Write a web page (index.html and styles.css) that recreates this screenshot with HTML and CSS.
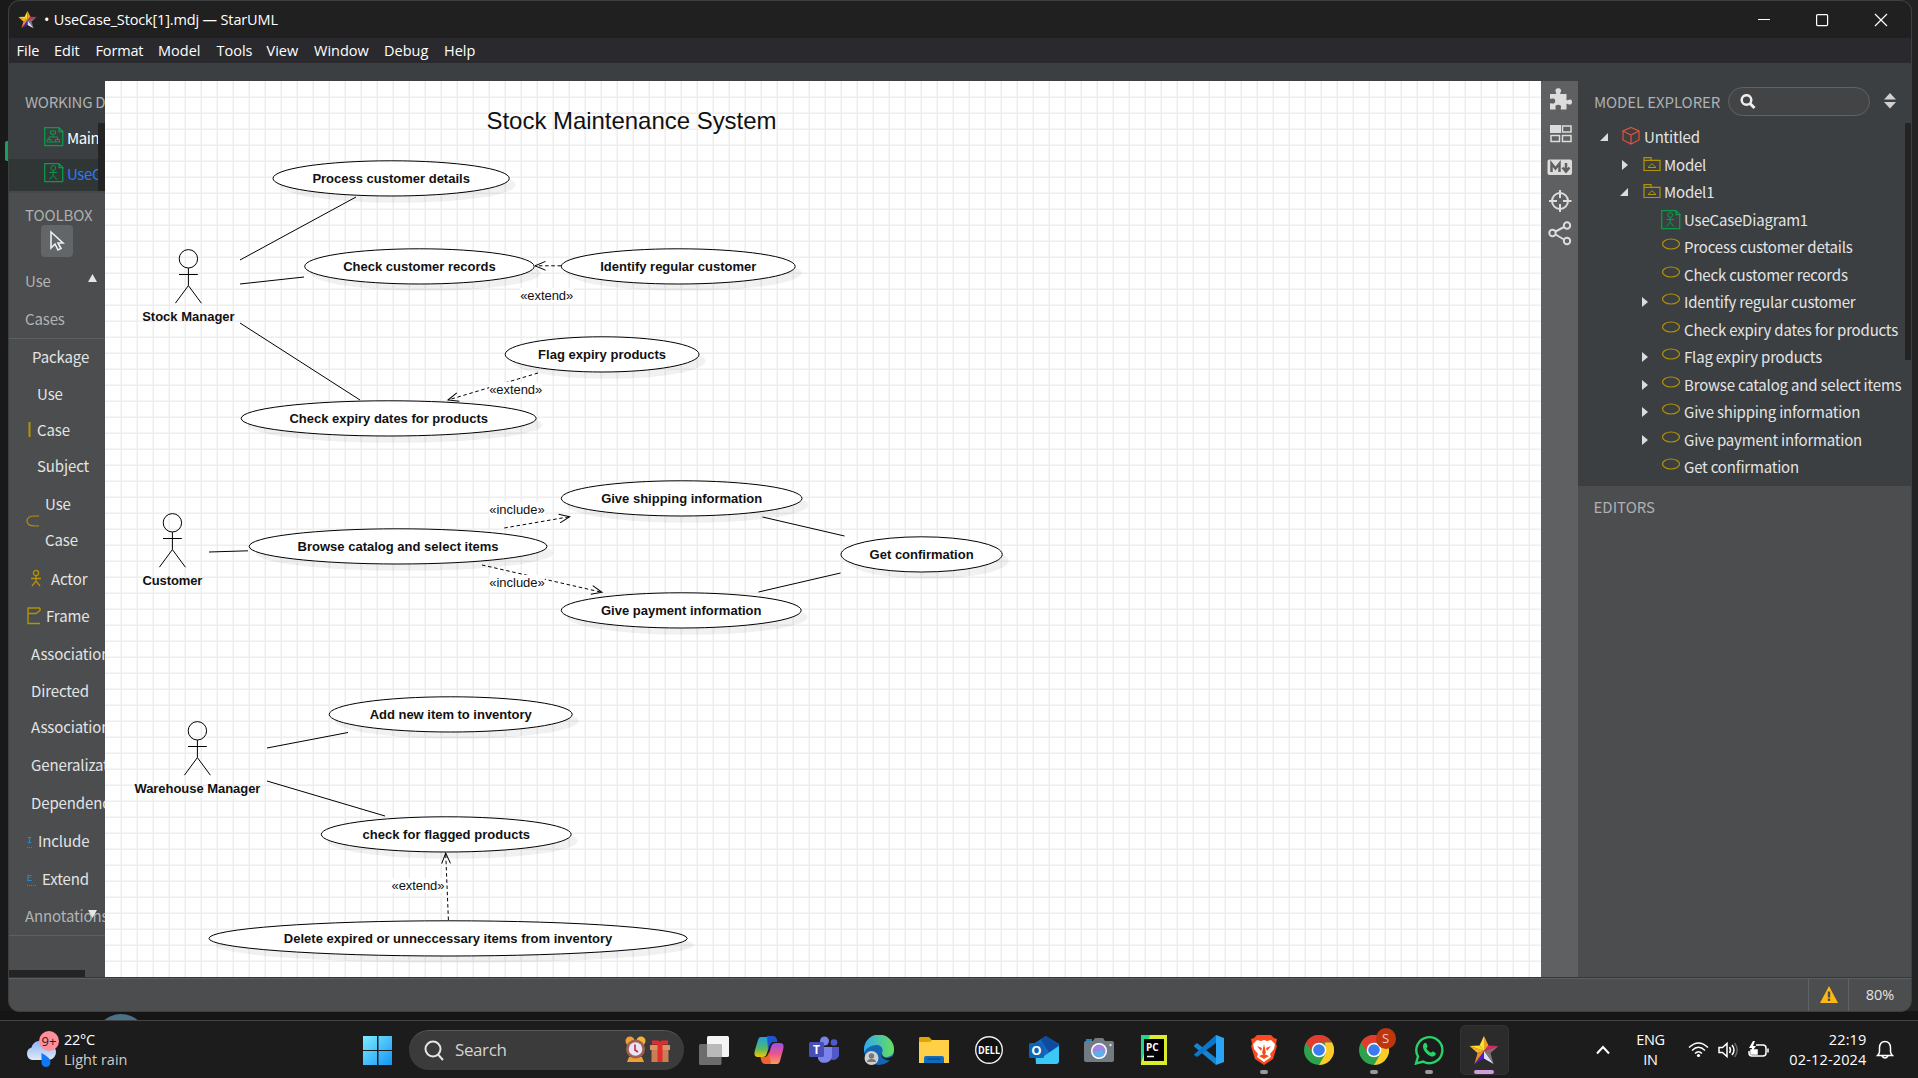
FILE: index.html
```html
<!DOCTYPE html>
<html lang="en">
<head>
<meta charset="utf-8">
<title>UseCase_Stock[1].mdj — StarUML</title>
<link rel="stylesheet" href="styles.css">
</head>
<body>
<svg width="0" height="0" class="defs">
  <defs>
    <symbol id="star" viewBox="0 0 30 30">
      <path d="M15 1 15 16 10.500 10.500Z" fill="#ffe12b"/><path d="M15 1 19.500 10.500 15 16Z" fill="#e9a02b"/>
      <path d="M19.500 10.500 29.500 11 15 16Z" fill="#e0245e"/><path d="M29.500 11 21.500 18 15 16Z" fill="#7d1238"/>
      <path d="M21.500 18 24.500 29 15 16Z" fill="#777"/><path d="M21.500 18 15 16 29.500 11Z" fill="#aaa" opacity=".55"/>
      <path d="M24.500 29 15 23.500 15 16Z" fill="#e3dcff"/><path d="M15 23.500 5.500 29 15 16Z" fill="#4b1fc0"/>
      <path d="M5.500 29 8.500 18 15 16Z" fill="#f08a24"/><path d="M8.500 18 .5 11 15 16Z" fill="#f7b32b"/>
      <path d="M.5 11 10.500 10.500 15 16Z" fill="#ffd92b"/>
    </symbol>
    <symbol id="usecase-doc" viewBox="0 0 20 20">
      <path d="M14.500.7H.7v18h18V5M15 .7v4h4zM15 .7l4 4" fill="none" stroke="#0a9a48" stroke-width="1.300"/>
      <circle cx="9.200" cy="5" r="2.400" fill="none" stroke="#0a9a48"/><path d="M9.200 7.400v5M5.500 9.500h7.400M5.500 16.500l3.700-4.200 3.700 4.200" fill="none" stroke="#0a9a48"/>
    </symbol>
    <symbol id="package" viewBox="0 0 18 16">
      <path d="M1 14.500V1.700h7v2.600h9v10.200zM1 4.300h7" fill="none" stroke="#b39305" stroke-width="1.200"/><path d="M5 11.500h8L9 7.700z" fill="none" stroke="#b39305"/>
    </symbol>
    <symbol id="oval" viewBox="0 0 20 14"><ellipse cx="10" cy="7" rx="8.500" ry="5" fill="none" stroke="#b39305" stroke-width="1.200"/></symbol>
    <symbol id="open" viewBox="0 0 8 8"><path d="M8 0v8H0z" fill="#dcdcdc"/></symbol>
    <symbol id="closed" viewBox="0 0 6 10"><path d="M0 0 6 5 0 10z" fill="#dcdcdc"/></symbol>
    <symbol id="chrome" viewBox="0 0 30 30">
      <circle cx="15" cy="15" r="15" fill="#2ca24c"/><path d="M15 0a15 15 0 0 1 13 7.500H15L9 18 2 7.500A15 15 0 0 1 15 0z" fill="#e33b2e"/>
      <path d="M28 7.500A15 15 0 0 1 15 30l6.500-11.300L21 7.500z" fill="#fccb26"/><circle cx="15" cy="15" r="7.300" fill="#fff"/><circle cx="15" cy="15" r="5.800" fill="#3a7bee"/>
    </symbol>
  </defs>
</svg>

<div class="desktop">
  <i class="peek peek-tab"></i><i class="peek peek-arc"></i>
  <div class="window">
    <header class="titlebar">
      <svg class="app-star"><use href="#star"/></svg>
      <span class="title"><b>•</b>UseCase_Stock[1].mdj — StarUML</span>
      <svg class="caption" width="150" height="36" fill="none" stroke="#fff" stroke-width="1.200"><path d="M10 17.500h12M127 12l12 12M139 12l-12 12"/><rect x="68.600" y="12.600" width="11" height="11" rx="1"/></svg>
    </header>
    <nav class="menubar"><span class="m1">File</span><span class="m2">Edit</span><span class="m3">Format</span><span class="m4">Model</span><span class="m5">Tools</span><span class="m6">View</span><span class="m7">Window</span><span class="m8">Debug</span><span class="m9">Help</span></nav>
    <div class="strip"></div>
    <main class="main">
      <aside class="left">
        <section class="working">
          <h2>WORKING D</h2>
          <div class="working-list">
            <div class="docs">
              <div class="doc"><svg width="20" height="20" viewBox="0 0 20 20" fill="none" stroke="#0a9a48"><path d="M14.500.7H.7v18h18V5M15 .7v4h4zM15 .7l4 4" stroke-width="1.300"/><path d="M6.500 4h5v3h-5zM9 7v3M5 12.500V10h8.500v2.500M3 12.500h4v2.500H3zM11.500 12.500h4v2.500h-4zM7 15h4.500"/></svg><span>Main</span></div>
              <div class="doc active"><svg width="20" height="20"><use href="#usecase-doc"/></svg><span>UseC</span></div>
            </div>
            <i class="thumb"></i>
          </div>
        </section>
        <section class="toolbox">
          <h2>TOOLBOX</h2>
          <div class="pointer"><svg width="16" height="22" viewBox="0 0 16 22"><path d="M2 2v16l4-4 3 6 3-1.500-3-5.500h5z" fill="none" stroke="#eee" stroke-width="1.600"/></svg></div>
          <div class="group">Use<br>Cases<svg class="up" width="9" height="8"><path d="M0 8 4.500 0 9 8z" fill="#e6e6e6"/></svg></div>
          <div class="tool h37 i24">Package</div>
          <div class="tool multi i29">Use<br>Case<br>Subject<svg class="bar" width="3" height="15"><path d="M1.500 0v15" stroke="#b39305" stroke-width="2"/></svg></div>
          <div class="tool multi i37">Use<br>Case<svg class="half" width="13" height="12" fill="none" stroke="#b39305" stroke-width="1.200"><path d="M13 1H9C3 1 1 3 1 6s2 5 8 5h4"/></svg></div>
          <div class="tool"><svg class="ic-actor" width="12" height="18" fill="none" stroke="#b39305" stroke-width="1.300"><circle cx="6" cy="4" r="2.600"/><path d="M6 7v5M1 9.500h10M2 17l4-5 4 5"/></svg>Actor</div>
          <div class="tool h37"><svg class="ic-frame" width="14" height="18" fill="none" stroke="#b39305" stroke-width="1.400"><path d="M13 1H1v15.500h12M1 6.500h8l4-3V1"/></svg>Frame</div>
          <div class="tool i22">Association</div>
          <div class="tool multi i23 directed">Directed<br>Association</div>
          <div class="tool i23">Generalization</div>
          <div class="tool i23">Dependency</div>
          <div class="tool"><span class="mark">I</span>Include</div>
          <div class="tool"><span class="mark wide">E</span>Extend</div>
          <div class="group last">Annotations<svg class="down" width="9" height="8"><path d="M0 0h9L4.500 8z" fill="#e6e6e6"/></svg></div>
          <i class="hthumb"></i>
        </section>
      </aside>

      <div class="canvas">
        <svg id="diagram" width="1436" height="896" viewBox="105 81 1436 896"></svg>
      </div>

      <div class="rail">
        <svg width="37" height="170" viewBox="0 0 37 170">
          <g fill="#dcdcdc"><path d="M9 13h6c1-1-1-2-.5-4 .5-2.500 5-2.500 5.500 0 .5 2-1.500 3-.5 4h6v6c1 1 2-1 4-.5 2 .5 2 4.500 0 5-2 .5-3-1.500-4-.5v5.500h-5.500c-1-1 1-2.500-.5-4-1-1-3.500-1-4.500 0-1.500 1.500.5 3-.5 4H9v-6c1-1 3 1 4.500-.5 1-1 1-3 0-4-1.500-1.500-3.500.5-4.500-.5z"/>
          <path d="M9 44h11v8H9z"/><rect x="6.500" y="78.500" width="24.500" height="15.500" rx="2"/></g>
          <g fill="none" stroke="#dcdcdc" stroke-width="1.500"><path d="M21.500 45h8.500v6h-8.500zM10 54.500h8.500v6H10zM21.500 54.500h8.500v6h-8.500z"/></g>
          <g fill="none" stroke="#5f6062" stroke-width="2.500"><path d="M10.500 91v-8.500l4 5 4-5V91"/><path d="M25 82v8M21.500 86.500l3.500 4 3.500-4"/></g>
          <g fill="none" stroke="#dcdcdc" stroke-width="2"><circle cx="19" cy="120" r="8"/><path d="M19 109v8M19 123v8M8 120h8M22 120h8.500"/><circle cx="11.500" cy="152" r="3.200"/><circle cx="26" cy="144.500" r="3.200"/><circle cx="26" cy="160" r="3.200"/><path d="m14.500 150.500 8.500-4.500M14.500 153.500l8.500 5"/></g>
        </svg>
      </div>

      <aside class="right">
        <section class="explorer">
          <div class="explorer-head">
            <h2>MODEL EXPLORER</h2>
            <div class="search"><svg width="16" height="16" fill="none" stroke="#eee"><circle cx="6.500" cy="6" r="4.800" stroke-width="2.500"/><path d="m10 9.500 4.500 4.500" stroke-width="3"/></svg></div>
            <svg class="sort" width="12" height="16" fill="#d0d0d0"><path d="M0 6.500 6 0l6 6.500zM0 9h12l-6 6.500z"/></svg>
          </div>
          <div class="tree-wrap">
            <div class="tree">
              <div class="node l1"><svg class="tw"><use href="#open"/></svg><svg class="ic" width="18" height="19" viewBox="0 0 18 19" fill="none" stroke="#e0533c" stroke-width="1.200"><path d="M9 1.500 17 5v9l-8 4-8-4V5zM1 5l8 4 8-4M9 9v9"/></svg>Untitled</div>
              <div class="node l2"><svg class="tw c"><use href="#closed"/></svg><svg class="ic" width="18" height="16"><use href="#package"/></svg>Model</div>
              <div class="node l2"><svg class="tw"><use href="#open"/></svg><svg class="ic" width="18" height="16"><use href="#package"/></svg>Model1</div>
              <div class="node l3"><svg class="ic" width="20" height="20"><use href="#usecase-doc"/></svg>UseCaseDiagram1</div>
              <div class="node l3"><svg class="ic" width="20" height="14"><use href="#oval"/></svg>Process customer details</div>
              <div class="node l3"><svg class="ic" width="20" height="14"><use href="#oval"/></svg>Check customer records</div>
              <div class="node l3"><svg class="tw c"><use href="#closed"/></svg><svg class="ic" width="20" height="14"><use href="#oval"/></svg>Identify regular customer</div>
              <div class="node l3"><svg class="ic" width="20" height="14"><use href="#oval"/></svg>Check expiry dates for products</div>
              <div class="node l3"><svg class="tw c"><use href="#closed"/></svg><svg class="ic" width="20" height="14"><use href="#oval"/></svg>Flag expiry products</div>
              <div class="node l3"><svg class="tw c"><use href="#closed"/></svg><svg class="ic" width="20" height="14"><use href="#oval"/></svg>Browse catalog and select items</div>
              <div class="node l3"><svg class="tw c"><use href="#closed"/></svg><svg class="ic" width="20" height="14"><use href="#oval"/></svg>Give shipping information</div>
              <div class="node l3"><svg class="tw c"><use href="#closed"/></svg><svg class="ic" width="20" height="14"><use href="#oval"/></svg>Give payment information</div>
              <div class="node l3"><svg class="ic" width="20" height="14"><use href="#oval"/></svg>Get confirmation</div>
            </div>
            <i class="tree-thumb"></i>
          </div>
        </section>
        <section class="editors"><h2>EDITORS</h2></section>
      </aside>
    </main>
    <footer class="status">
      <span class="warn"><svg width="18" height="17"><path d="M9 0 18 17H0z" fill="#fdb813"/><path d="M9 5.500v6M9 12.500v2.500" stroke="#4b4d4f" stroke-width="2.400"/></svg></span>
      <span class="zoom">80%</span>
    </footer>
  </div>
</div>

<div class="taskbar">
  <div class="weather">
    <svg width="36" height="38" viewBox="0 0 36 38"><defs><linearGradient id="cl" x2="0" y2="1"><stop stop-color="#8db7f5"/><stop offset="1" stop-color="#dfe8f8"/></linearGradient></defs>
      <path d="M7 29a6.500 6.500 0 0 1-.5-12.500A9 9 0 0 1 22 13a7 7 0 0 1 2 16z" fill="url(#cl)"/><path d="M16.500 22c5 3 9 5 9 9.500a4.500 4.500 0 0 1-9 0z" fill="#0f78f2"/><circle cx="24" cy="10" r="10" fill="#ff8f9b"/><text x="24" y="15" text-anchor="middle" class="badge-text">9+</text></svg>
    <div class="two">22°C<br><em>Light rain</em></div>
  </div>
  <div class="start"><svg width="30" height="30"><defs><linearGradient id="win" x2="1" y2="1"><stop stop-color="#7cecff"/><stop offset="1" stop-color="#1495f5"/></linearGradient></defs><path d="M0 1h14v14H0zM15.500 1H29v14H15.500zM0 16h14v14H0zM15.500 16H29v14H15.500z" fill="url(#win)"/></svg></div>
  <div class="find">
    <svg width="20" height="21" fill="none" stroke="#e4e4e4" stroke-width="2"><circle cx="9" cy="9" r="7.500"/><path d="m14 14.500 5 5.500"/></svg>
    <span>Search</span>
    <svg width="48" height="28"><circle cx="6" cy="5" r="4.500" fill="#f0a030"/><circle cx="17" cy="5" r="4.500" fill="#f5b530"/><path d="M5 21h13l2 5H3z" fill="#f0a030"/><circle cx="11.500" cy="13" r="9.500" fill="#9c6250"/><circle cx="11.500" cy="13" r="6.800" fill="#eae4f7"/><path d="M11 8.500V14l3 2" fill="none" stroke="#c22a48" stroke-width="1.600"/><path d="M26 9h20v5H26z" fill="#dd9263"/><path d="M27.500 14h17v12h-17z" fill="#c87f55"/><path d="M33.500 8h5v18h-5z" fill="#e22d2d"/><path d="M28 4.500h7l1 2 1-2h7v4H28z" fill="#e22d2d"/></svg>
  </div>
  <div class="apps">
    <span class="app"><svg viewBox="0 0 30 30"><rect x="8" y="1" width="22" height="21" rx="1.500" fill="#f4f4f4"/><rect x="0" y="9" width="22.500" height="21" rx="1.500" fill="#6c6c6c"/><path d="M8 9h14.500v13H8z" fill="#b9b9b9"/></svg></span>
    <span class="app"><svg viewBox="0 0 30 30"><defs><linearGradient id="c1" x2="0" y2="1"><stop stop-color="#1ba0ea"/><stop offset=".6" stop-color="#5cb85c"/><stop offset="1" stop-color="#f5c800"/></linearGradient><linearGradient id="c2" x2="0" y2="1"><stop stop-color="#9b4fe8"/><stop offset=".5" stop-color="#e8558f"/><stop offset="1" stop-color="#ff9a5a"/></linearGradient></defs><path d="M7 2h11l-5 16c-1 3-2 4-5 4H4c-4 0-4-3-3-7l3-10c.6-2 1.500-3 3-3z" fill="url(#c1)"/><path d="M13 1h6c3 0 4 3 4.500 6H20c-3 0-4 2-5 5l-1 3z" fill="#1b56d0"/><path d="M23 29H12l5-17c1-3 2-4 5-4h4c4 0 4 3 3 7l-3 11c-.6 2-1.500 3-3 3z" fill="url(#c2)"/><path d="M17 29h-6c-3 0-4-3-4.500-7H10c3 0 4-2 5-5z" fill="#ef6233"/></svg></span>
    <span class="app"><svg viewBox="0 0 30 30"><circle cx="15.500" cy="6" r="4.500" fill="#7b83eb"/><circle cx="25" cy="7.500" r="3.300" fill="#5059c9"/><path d="M21 12h9v9a6 6 0 0 1-9 3z" fill="#5059c9"/><path d="M9 12h14v9a7.500 7.500 0 0 1-14 3z" fill="#7b83eb"/><rect y="7" width="15" height="15" rx="1.500" fill="#4650b8"/><text x="7.500" y="19" text-anchor="middle" class="glyph g12">T</text></svg></span>
    <span class="app"><svg viewBox="0 0 30 30"><defs><linearGradient id="ed"><stop stop-color="#31a8f0"/><stop offset="1" stop-color="#65e05a"/></linearGradient></defs><circle cx="15" cy="15" r="15" fill="#1266b4"/><path d="M0 14A15 15 0 0 1 30 15c0 5-4 7-8 7-3 0-5-2-4-4 2-4-1-8-5-8-6 0-11 3-13 8z" fill="url(#ed)"/><path d="M18 18c0 6 5 7 11 3l3 3-5 1c-5 1-11-2-9-7z" fill="#1c1c1c"/><circle cx="7.500" cy="23" r="7" fill="#cfcfcf"/><circle cx="7.500" cy="21" r="2.700" fill="#777"/><path d="M3 27a4.500 3 0 0 1 9 0z" fill="#777"/></svg></span>
    <span class="app"><svg viewBox="0 0 30 30"><path d="M0 3.500C0 2 .5 2 2 2h8l3 3h17v23H0z" fill="#e2a400"/><path d="M0 7h11l2-2h17v23H0z" fill="#ffcf48"/><path d="M5 28v-5q0-2 2-2h16q2 0 2 2v5z" fill="#0f6cbd"/><path d="M8.500 24h13" stroke="#0a3f78"/></svg></span>
    <span class="app"><svg viewBox="0 0 30 30"><circle cx="15" cy="15" r="13.300" fill="#111" stroke="#eee" stroke-width="1.400"/><text x="15" y="18.700" text-anchor="middle" class="glyph g10" textLength="22" lengthAdjust="spacingAndGlyphs">DELL</text></svg></span>
    <span class="app"><svg viewBox="0 0 30 30"><path d="M4 9 17 1l13 8v16l-3 4H7z" fill="#1667c0"/><path d="M12 5 17 1l13 9-10 7z" fill="#0c4ba0"/><path d="M7 19l8 2 15-10v15q0 3-3 3H7z" fill="#3cc8f5"/><rect y="8" width="15" height="15" rx="1.500" fill="#0a64b8"/><text x="7.500" y="20" text-anchor="middle" class="glyph g13">O</text></svg></span>
    <span class="app"><svg viewBox="0 0 30 30"><path d="M2 4h6v4H2z" fill="#1688c9"/><path d="M2 6h7l2-3h8l2 3h7q2 0 2 2v17q0 2-2 2H2q-2 0-2-2V8q0-2 2-2z" fill="#737b82"/><circle cx="15" cy="16" r="8" fill="#fff"/><circle cx="15" cy="16" r="6.500" fill="#a186e0"/><path d="M9 18a6.500 6.500 0 0 0 12 0l-3-3z" fill="#59b2ee"/><circle cx="26.500" cy="10" r="1.200" fill="#ddd"/></svg></span>
    <span class="app"><svg viewBox="0 0 30 30"><path d="M2 0h26v30H2z" fill="#d9ec2d"/><path d="M2 0h9L2 28z" fill="#21d789"/><path d="M5 4h20v22H5z" fill="#000"/><text x="7" y="15.500" class="glyph g10">PC</text><path d="M8 21.500h7" stroke="#fff" stroke-width="1.500"/></svg></span>
    <span class="app"><svg viewBox="0 0 30 30"><path d="M0 10.500 3 8l19 15v7L0 11.500z" fill="#1684cf"/><path d="M0 19.500 22 0v8L3 22l-3-2z" fill="#0a77c9"/><path d="M22 0l8 3v24l-8 3z" fill="#2aa5f5"/></svg></span>
    <span class="app run"><svg viewBox="0 0 30 30"><path d="M8 0h14l3 3 3 1-1 5 1 2-4 13-9 6-9-6L2 11l1-2-1-5 3-1z" fill="#fb4a1e"/><path d="m8 5 4 1 3-1 3 1 4-1 4 4-1 5-4 5 1 3-7 5-7-5 1-3-4-5-1-5z" fill="#fff"/><path d="M8 11l5 2-1 3zM22 11l-5 2 1 3zM15 9l2 9-2 2-2-2zM10 21l5-2 5 2-5 3z" fill="#fb4a1e"/></svg></span>
    <span class="app"><svg><use href="#chrome"/></svg></span>
    <span class="app run"><svg><use href="#chrome"/></svg><b class="profile">S</b></span>
    <span class="app run"><svg viewBox="0 0 30 30" fill="none" stroke="#25d366" stroke-width="2.400"><path d="M2 28.500 4 21.500A13 13 0 1 1 9 26.500z"/><path d="M10 8.500c1.500-1.500 2.500-.5 3.500 2.500.5 1-1.500 2-1 2.500 1 2 2.500 3 4 4 1 .5 1.800-1.500 2.500-1 3 1.300 3.500 2 2 4-2 2-5 1-8-1.500-3-3-5.500-7.500-3-10.500z" fill="#25d366" stroke="none"/></svg></span>
    <span class="app current"><svg><use href="#star"/></svg></span>
  </div>
  <div class="tray">
    <svg class="chev" width="14" height="10" fill="none" stroke="#fff" stroke-width="2"><path d="m1 8.500 6-6.500 6 6.500"/></svg>
    <div class="two lang">ENG<br>IN</div>
    <svg class="sys" width="84" height="20" fill="none" stroke="#fff" stroke-width="1.500">
      <path d="M1 7.500q9.500-9 19 0M4 10.500q6.500-6.500 13 0M7 13.500q3.500-3.500 7 0"/><circle cx="10.500" cy="15.500" r="1.600" fill="#fff" stroke="none"/>
      <path d="M31 7.500v5h3.500l4.500 4v-13l-4.500 4zM41.500 7q2 3 0 6M44 5q4 5 0 10"/><path d="M46.500 3q5.500 7 0 14" stroke="#666"/>
      <path d="M68 5h7q3 0 3 3v5q0 3-3 3H64q-3 0-3-3v-2M80 8.500v4"/><path d="M63 10h6v4h-6z" fill="#fff"/><path d="M65 1l-4 7h3l-1 5 5-7h-3l2-5z" fill="#fff" stroke="none"/>
    </svg>
    <div class="two clock">22:19<br>02-12-2024</div>
    <svg width="18" height="20" fill="none" stroke="#fff" stroke-width="1.500"><path d="M1.500 15.500h15q-2-2-2-4V7.500q-.5-6-5.500-6t-5.500 6v4q0 2-2 4zM6 16q3 4 6 0"/></svg>
  </div>
</div>
<script src="diagram.js"></script>
</body>
</html>
```
FILE: styles.css
```css
* { box-sizing: border-box; }
body { margin: 0; width: 1918px; height: 1078px; overflow: hidden; display: flex; flex-direction: column; background: #181818; color: #e4e4e4; font-family: "Noto Sans CJK SC", sans-serif; font-size: 15px; }
svg { display: block; flex: none; }
.defs { position: absolute; }
i { display: block; }
h2 { margin: 0; font-size: 15px; font-weight: 400; color: #aeb0b1; white-space: nowrap; }

.desktop { position: relative; height: 1020px; flex: none; overflow: hidden; padding: 0 6px 0 8px; background: linear-gradient(90deg, #191919 50%, #232323 50%); }
.desktop::after { content: ""; position: absolute; left: 0; right: 0; bottom: 0; height: 9px; background: #151515; z-index: 0; }
.peek { position: absolute; z-index: 1; }
.peek-tab { left: 5px; top: 141px; width: 4px; height: 20px; background: #17a05c; border-radius: 2px 0 0 2px; }
.peek-arc { left: 95px; top: 1014px; width: 52px; height: 52px; border-radius: 50%; background: #4b7187; }
.window { position: relative; z-index: 1; width: 1904px; height: 1012px; display: flex; flex-direction: column; border: 1px solid #3e3f40; border-radius: 11px; overflow: hidden; background: #4b4d4f; }

.titlebar { height: 37px; flex: none; display: flex; align-items: center; background: #202020; padding: 0 13px 0 9px; }
.app-star { width: 19px; height: 19px; }
.title { flex: 1; margin-left: 7px; font: 14.500px "Open Sans", sans-serif; color: #fff; letter-spacing: -.15px; }
.title b { font-weight: 400; margin-right: 4.500px; }
.menubar { height: 25px; flex: none; display: flex; align-items: center; background: #2a2a2e; font: 14.500px "Open Sans", sans-serif; color: #fff; padding-left: 7.500px; }
.m1 { width: 37.500px; } .m2 { width: 41.500px; } .m3 { width: 62.500px; letter-spacing: -.15px; } .m4 { width: 58.500px; } .m5 { width: 50px; } .m6 { width: 47.500px; } .m7 { width: 70px; } .m8 { width: 60px; } .m9 { width: 40px; }
.strip { height: 18px; flex: none; background: #3b3f41; }
.main { height: 896px; flex: none; display: flex; }

.left { width: 96px; flex: none; overflow: hidden; letter-spacing: -.12px; }
.working { height: 112px; background: #3b3f41; border-bottom: 2px solid #46494b; }
.working h2 { height: 42px; line-height: 42px; padding-left: 16px; letter-spacing: -.25px; }
.working-list { display: flex; justify-content: space-between; }
.docs { width: 89px; overflow: hidden; }
.thumb { width: 7px; height: 68px; background: #242424; }
.doc { display: flex; align-items: center; height: 36px; gap: 3px; padding: 0 0 8px 35px; white-space: nowrap; color: #fff; letter-spacing: -.4px; }
.doc.active { height: 32px; padding-bottom: 4px; background: #303536; color: #2a7bf6; }
.toolbox { height: 784px; display: flex; flex-direction: column; background: #4b4d4f; }
.toolbox h2 { height: 32px; line-height: 44px; padding-left: 16px; }
.pointer { width: 32px; height: 32px; margin-left: 32px; border-radius: 4px; background: #636669; display: flex; align-items: center; justify-content: center; }
.group { position: relative; height: 82px; padding: 5px 0 0 16px; line-height: 38px; color: #b2b3b4; border-bottom: 1px solid #5d6062; }
.group.last { height: 38px; padding-top: 0; line-height: 36px; }
.up, .down { position: absolute; left: 79px; top: 17px; }
.down { top: 12px; }
.tool { position: relative; flex: none; display: flex; align-items: center; height: 38px; padding-bottom: 2px; white-space: nowrap; }
.h37 { height: 37px; }
.multi { display: block; height: auto; line-height: 36px; margin: 0 0 1px; padding-bottom: 1px; }
.i22 { padding-left: 22px; } .i23 { padding-left: 22px; } .i24 { padding-left: 23px; } .i29 { padding-left: 28px; } .i37 { padding-left: 36px; }
.directed { margin-bottom: 0; }
.bar { position: absolute; left: 19px; top: 46px; }
.half { position: absolute; left: 17px; top: 29px; }
.ic-actor { margin: 0 9px 0 21px; }
.ic-frame { margin: 0 5px 0 18px; }
.mark { width: 5px; margin: 3px 6px 0 18px; font: 9px/11px "Liberation Mono", monospace; color: #1e90e0; border-bottom: 1px dotted #1e90e0; }
.mark.wide { width: 9px; }
.hthumb { width: 76px; height: 7px; margin-top: auto; background: #242424; }

.canvas { width: 1436px; flex: none; background: #fff; }
.canvas text { font-family: "Liberation Sans", Arial, sans-serif; text-anchor: middle; fill: #111; }
.name { font-size: 13px; font-weight: 700; }
.stereo { font-size: 13px; }
.heading { font-size: 24px; }

.rail { width: 36.500px; flex: none; background: #5f6062; }
.right { flex: 1; overflow: hidden; background: #4b4d4f; }
.explorer { height: 405px; background: #3b3f41; }
.explorer-head { height: 42px; display: flex; align-items: center; padding: 0 0 0 16.500px; }
.explorer-head h2 { width: 133.500px; flex: none; margin-top: -1px; letter-spacing: -.1px; }
.search { width: 142px; height: 29px; flex: none; margin-top: -1px; padding: 6px 11px; border: 1px solid #606364; border-radius: 15px; background: #434446; }
.sort { margin: -2px 0 0 14px; }
.tree-wrap { display: flex; justify-content: space-between; height: 363px; }
.tree { width: 327px; letter-spacing: -.19px; }
.tree-thumb { width: 6px; height: 237px; background: #242424; }
.node { position: relative; height: 27.500px; line-height: 27px; white-space: nowrap; }
.l1 { padding-left: 66.500px; } .l2 { padding-left: 86.500px; } .l3 { padding-left: 106.500px; }
.tw { position: absolute; width: 8px; height: 8px; left: 22px; top: 10px; }
.tw.c { width: 6px; height: 10px; top: 9px; }
.l2 .tw { left: 42px; } .l2 .tw.c { left: 44px; } .l3 .tw { left: 64.500px; }
.ic { position: absolute; left: 44.500px; top: 3px; }
.l2 .ic { left: 65px; top: 5px; } .l3 .ic { left: 83px; top: 4px; }
.editors h2 { line-height: 42px; padding-left: 16px; }

.status { height: 34px; flex: none; display: flex; justify-content: flex-end; border-top: 1px solid #343739; box-shadow: inset 0 1px #5c5f61; font: 14.500px "Open Sans", sans-serif; }
.warn { width: 41px; border-left: 1px solid #5f6264; border-right: 1px solid #5f6264; display: flex; align-items: center; justify-content: center; }
.zoom { width: 62px; line-height: 33px; text-align: center; }

.taskbar { height: 58px; flex: none; display: flex; align-items: center; background: #1c1c1c; border-top: 1px solid #434343; font: 14.500px/20px "Open Sans", sans-serif; color: #fff; }
.two { line-height: 20px; white-space: nowrap; letter-spacing: -.3px; }
.two em { font-style: normal; color: #ccc; letter-spacing: 0; }
.weather { width: 363px; flex: none; display: flex; gap: 3px; padding-left: 25px; align-items: center; }
.badge-text { font: 13px "Open Sans", sans-serif; fill: #222; }
.start { width: 46px; flex: none; }
.find { width: 275px; height: 40px; flex: none; display: flex; align-items: center; padding: 0 12px 0 15px; border-radius: 20px; background: #3b3b3b; border-top: 1px solid #575757; font-size: 17px; color: #d4d4d4; }
.find span { flex: 1; margin-left: 11px; letter-spacing: -.4px; }
.apps { display: flex; margin-left: 2.500px; }
.app { position: relative; width: 55px; height: 50px; display: flex; align-items: center; justify-content: center; }
.app > svg { width: 30px; height: 30px; }
.app.run::after, .app.current::after { content: ""; position: absolute; bottom: 1px; width: 8px; height: 4px; border-radius: 2px; background: #999; }
.app.current::before { content: ""; position: absolute; inset: 0 3px; border-radius: 5px; background: #2b2b2b; border: 1px solid #333; }
.app.current > svg { position: relative; }
.app.current::after { width: 20px; background: #d49bdc; }
.profile { position: absolute; left: 29px; top: 3px; width: 20px; height: 21px; border-radius: 50%; background: #bf360c; color: #f3c9bb; text-align: center; font-weight: 400; font-size: 13px; }
.glyph { fill: #fff; font-family: "Open Sans", sans-serif; font-weight: 700; }
.g10 { font-size: 10px; } .g12 { font-size: 12px; } .g13 { font-size: 13px; }
.tray { flex: 1; display: flex; align-items: center; padding-left: 84px; }
.lang { width: 78px; padding-left: 4px; text-align: center; }
.clock { width: 95px; text-align: right; margin-right: 9px; letter-spacing: .15px; }
```
FILE: diagram.js
```js
const parts = [];
for (let x = 121.3; x < 1541; x += 16) parts.push(`<path d="M${x} 81V977" stroke="#eeeeee" stroke-width="1.6"/>`);
for (let y = 97.2; y < 977; y += 16) parts.push(`<path d="M105 ${y}H1541" stroke="#eeeeee" stroke-width="1.6"/>`);

// Use cases: left, right, centre y, label, label width
const useCases = [
  [273, 509.3, 178.4, "Process customer details", 157.5],
  [304.7, 534.2, 266.4, "Check customer records", 152.5],
  [561.3, 795.2, 266.4, "Identify regular customer", 156],
  [505.2, 699, 354.4, "Flag expiry products", 128],
  [241.2, 536.2, 418.4, "Check expiry dates for products", 198.5],
  [561.3, 802, 498.4, "Give shipping information", 161],
  [249.2, 547, 546.4, "Browse catalog and select items", 201],
  [841, 1002.2, 554.4, "Get confirmation", 104],
  [561.3, 801.2, 610.4, "Give payment information", 160.5],
  [329.2, 572.2, 714.4, "Add new item to inventory", 162],
  [321.3, 571.2, 834.4, "check for flagged products", 167.5],
  [209, 687.2, 938.4, "Delete expired or unneccessary items from inventory", 328.5]
];
for (const [l, r, y] of useCases)
  parts.push(`<ellipse cx="${(l + r) / 2 + 6.4}" cy="${y + 6.6}" rx="${(r - l) / 2}" ry="17.8" fill="#000" fill-opacity=".055"/>`);
for (const [l, r, y, label, w] of useCases)
  parts.push(`<ellipse cx="${(l + r) / 2}" cy="${y}" rx="${(r - l) / 2}" ry="17.6" fill="#fff" stroke="#000"/>
    <text class="name" x="${(l + r) / 2}" y="${y + 4.6}" textLength="${w}">${label}</text>`);

for (const [x, y, label, w] of [[188.4, 258.8, "Stock Manager", 92.5], [172.4, 522.8, "Customer", 60], [197.4, 730.8, "Warehouse Manager", 126]])
  parts.push(`<g fill="none" stroke="#000"><circle cx="${x}" cy="${y}" r="9.2"/><path d="M${x} ${y + 9.2}v17.6M${x - 9.4} ${y + 15.7}h18.8M${x - 13} ${y + 44.4}l13-17.6 13 17.6"/></g>
    <text class="name" x="${x}" y="${y + 62.2}" textLength="${w}">${label}</text>`);

parts.push(`<path d="M240 260 356 197M240 284l64-7M240 323l120 77M209 552l39-1.2M762.500 517l82 19M758.500 592l82-19M267 748l81-15.500M267 781l118 35" fill="none" stroke="#000"/>`);
parts.push(`<path d="M561 265.800H535M538 373l-90 27M504.300 528l65.400-11.300M482 565l120 27.300M448.400 920l-2.700-67" fill="none" stroke="#000" stroke-dasharray="3.500 2.700"/>`);

// Open arrow heads: tip x, tip y, direction in degrees
for (const [x, y, a] of [[535, 265.8, 180], [448, 400, 163.3], [569.7, 516.7, -10], [602, 592.3, 13], [445.7, 853, -92]])
  parts.push(`<path d="M-10.500-4.400 0 0-10.500 4.400" transform="translate(${x} ${y}) rotate(${a})" fill="none" stroke="#000"/>`);

for (const [x, y, label, w] of [[546.7, 300, "«extend»", 53], [515.7, 394, "«extend»", 53], [517, 514, "«include»", 55.5], [517, 587, "«include»", 55.5], [418, 890, "«extend»", 53]])
  parts.push(`<rect x="${x - w / 2}" y="${y - 12}" width="${w}" height="15" fill="#fff"/><text class="stereo" x="${x}" y="${y}" textLength="${w}">${label}</text>`);

parts.push(`<text class="heading" x="631.500" y="129" textLength="290">Stock Maintenance System</text>`);
document.getElementById("diagram").innerHTML = parts.join("");
```
